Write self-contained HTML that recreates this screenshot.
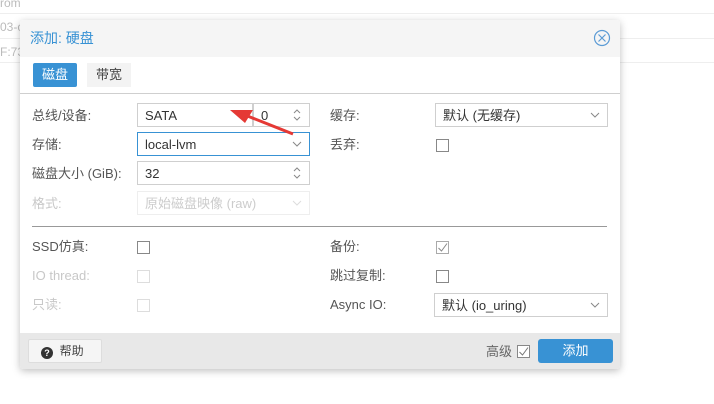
<!DOCTYPE html>
<html><head><meta charset="utf-8"><style>
*{margin:0;padding:0;box-sizing:border-box}
body{width:714px;height:404px;background:#fff;position:relative;overflow:hidden;font-family:"Liberation Sans","Noto Sans CJK SC",sans-serif;font-size:13px;line-height:16px;color:#444}
.a{position:absolute}
.lbl{position:absolute;font-size:13px;line-height:16px;color:#555}
.dis{color:#c8c8c8}
.in{position:absolute;border:1px solid #cfcfcf;background:#fff;height:24px;padding-left:7px;padding-top:4px;line-height:16px;color:#333}
.cb{position:absolute;width:13px;height:13px;border:1px solid #888;background:#fff}
.cb.d{border-color:#ddd}
.chev{position:absolute;right:7px;top:7px}
.spin{position:absolute;right:7px;top:4px}
</style></head><body>
<div class="a" style="left:0;top:13px;width:714px;border-top:1px solid #eee"></div>
<div class="a" style="left:0;top:38px;width:714px;border-top:1px solid #eee"></div>
<div class="a" style="left:0;top:62px;width:714px;border-top:1px solid #eee"></div>
<div class="a" style="left:0;top:-5px;color:#bbb;font-size:12px">rom</div>
<div class="a" style="left:0;top:19px;color:#bbb;font-size:12px">03-c</div>
<div class="a" style="left:0;top:44px;color:#bbb;font-size:12px">F:73</div>

<div class="a" style="left:20px;top:20px;width:600px;height:349px;background:#fff;border-radius:3px;box-shadow:0 2px 8px rgba(0,0,0,.25)">
  <div class="a" style="left:0;top:0;width:600px;height:37px;background:#f5f5f5;border-radius:3px 3px 0 0"></div>
  <div class="a" style="left:10px;top:9px;font-size:14px;line-height:18px;color:#3892d4">添加: 硬盘</div>
  <svg class="a" style="left:573px;top:9px" width="18" height="18" viewBox="0 0 18 18"><circle cx="9" cy="9" r="7.5" fill="none" stroke="#5b9bd5" stroke-width="1.2"/><path d="M5.5 5.5L12.5 12.5M12.5 5.5L5.5 12.5" stroke="#5b9bd5" stroke-width="1.2"/></svg>
  <div class="a" style="left:13px;top:43px;width:44px;height:24px;background:#3892d4;color:#fff;text-align:center;line-height:24px;border-radius:2px">磁盘</div>
  <div class="a" style="left:67px;top:43px;width:44px;height:24px;background:#f3f3f3;color:#444;text-align:center;line-height:24px">带宽</div>
  <div class="a" style="left:0;top:73px;width:600px;border-top:1px solid #cfcfcf"></div>

  <div class="lbl" style="left:12px;top:88px">总线/设备:</div>
  <div class="in" style="left:117px;top:83px;width:116px">SATA</div>
  <div class="in" style="left:233px;top:83px;width:57px">0<svg class="spin" width="10" height="14"><path d="M2 5L5 2L8 5M2 9L5 12L8 9" fill="none" stroke="#888"/></svg></div>
  <div class="lbl" style="left:12px;top:117px">存储:</div>
  <div class="in" style="left:117px;top:112px;width:173px;border-color:#3892d4">local-lvm<svg class="chev" width="10" height="8"><path d="M1 2L5 6L9 2" fill="none" stroke="#888"/></svg></div>
  <div class="lbl" style="left:12px;top:146px">磁盘大小 (GiB):</div>
  <div class="in" style="left:117px;top:141px;width:173px">32<svg class="spin" width="10" height="14"><path d="M2 5L5 2L8 5M2 9L5 12L8 9" fill="none" stroke="#888"/></svg></div>
  <div class="lbl dis" style="left:12px;top:176px">格式:</div>
  <div class="in dis" style="left:117px;top:171px;width:173px;border-color:#eee;color:#ccc">原始磁盘映像 (raw)<svg class="chev" width="10" height="8"><path d="M1 2L5 6L9 2" fill="none" stroke="#ddd"/></svg></div>

  <div class="lbl" style="left:310px;top:88px">缓存:</div>
  <div class="in" style="left:415px;top:83px;width:173px">默认 (无缓存)<svg class="chev" width="10" height="8"><path d="M1 2L5 6L9 2" fill="none" stroke="#888"/></svg></div>
  <div class="lbl" style="left:310px;top:117px">丢弃:</div>
  <div class="cb" style="left:416px;top:119px"></div>

  <div class="a" style="left:12px;top:206px;width:575px;border-top:1px solid #999"></div>

  <div class="lbl" style="left:12px;top:219px">SSD仿真:</div>
  <div class="cb" style="left:117px;top:221px"></div>
  <div class="lbl dis" style="left:12px;top:248px">IO thread:</div>
  <div class="cb d" style="left:117px;top:250px"></div>
  <div class="lbl dis" style="left:12px;top:277px">只读:</div>
  <div class="cb d" style="left:117px;top:279px"></div>

  <div class="lbl" style="left:310px;top:219px">备份:</div>
  <div class="cb" style="left:416px;top:221px;border-color:#aaa"><svg width="11" height="11" style="position:absolute;left:0;top:0"><path d="M1.5 6L4.5 9L10 1.5" fill="none" stroke="#888" stroke-width="1"/></svg></div>
  <div class="lbl" style="left:310px;top:248px">跳过复制:</div>
  <div class="cb" style="left:416px;top:250px"></div>
  <div class="lbl" style="left:310px;top:277px">Async IO:</div>
  <div class="in" style="left:414px;top:273px;width:174px">默认 (io_uring)<svg class="chev" width="10" height="8"><path d="M1 2L5 6L9 2" fill="none" stroke="#888"/></svg></div>

  <div class="a" style="left:0;top:313px;width:600px;height:36px;background:#e8e8e8;border-radius:0 0 3px 3px"></div>
  <div class="a" style="left:8px;top:319px;width:74px;height:24px;background:#f5f5f5;border:1px solid #ddd;border-radius:2px;line-height:22px;padding-left:12px;font-size:12px;color:#444"><span style="display:inline-block;width:12px;height:12px;border-radius:50%;background:#333;color:#fff;font-size:9px;line-height:12px;text-align:center;font-weight:bold;vertical-align:-1px">?</span>&nbsp; 帮助</div>
  <div class="a" style="left:466px;top:324px;color:#666;line-height:16px">高级</div>
  <div class="cb" style="left:497px;top:325px;border-color:#888"><svg width="11" height="11" style="position:absolute;left:0;top:0"><path d="M1.5 6L4.5 9L10 1.5" fill="none" stroke="#777" stroke-width="1"/></svg></div>
  <div class="a" style="left:518px;top:319px;width:75px;height:24px;background:#3892d4;border-radius:3px;color:#fff;text-align:center;line-height:24px">添加</div>
</div>

<svg class="a" style="left:225px;top:105px" width="80" height="40" viewBox="0 0 80 40"><path d="M68 29L20 10" stroke="#e53935" stroke-width="3"/><path d="M5 5L28 5L20 18Z" fill="#e53935"/></svg>
</body></html>
